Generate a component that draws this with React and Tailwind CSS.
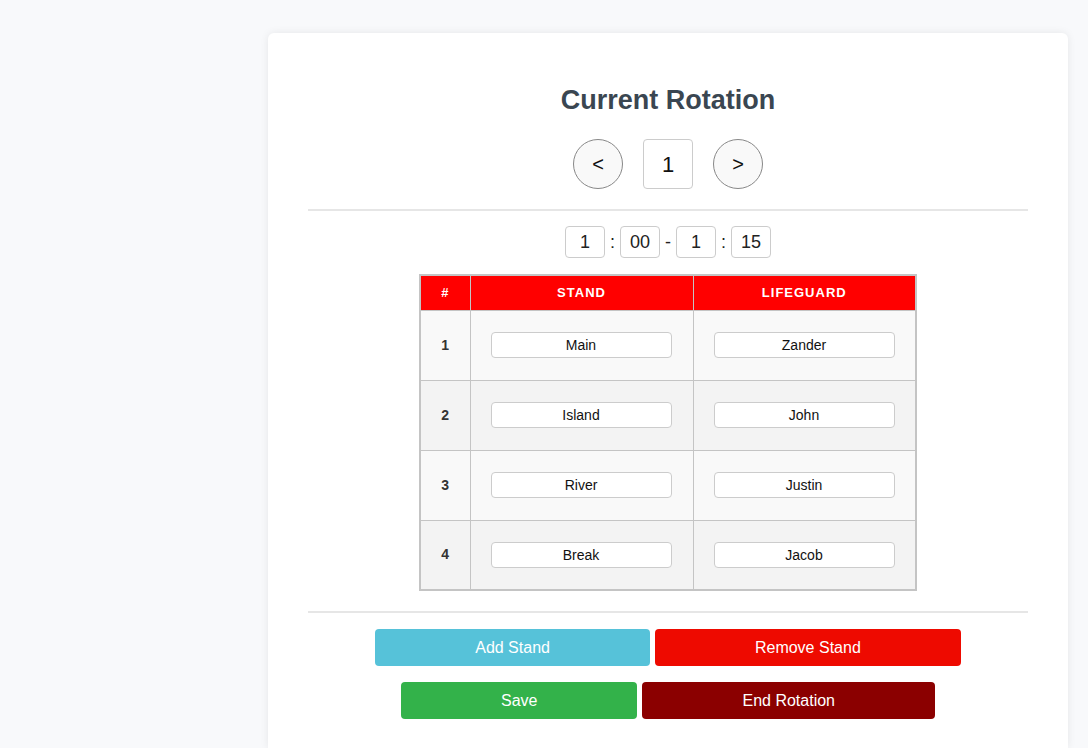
import React, { useState } from 'react';

const rows = [
  { stand: 'Main', guard: 'Zander' },
  { stand: 'Island', guard: 'John' },
  { stand: 'River', guard: 'Justin' },
  { stand: 'Break', guard: 'Jacob' },
];

function TimeBox({ value }) {
  return (
    <input
      defaultValue={value}
      className="w-[40px] h-[32px] rounded-[4px] border border-[#cccccc] bg-white text-center text-[18px] text-[#222] outline-none"
    />
  );
}

export default function App() {
  const [rotation, setRotation] = useState(1);

  return (
    <div
      className="h-[748px] overflow-hidden bg-[#f8f9fb] pl-[268px] pr-[20px] pt-[33px]"
      style={{ fontFamily: '"Liberation Sans", Arial, sans-serif' }}
    >
      <div className="w-[800px] h-[715px] rounded-t-[6px] bg-white px-[40px] pt-[52px] shadow-[0_0_8px_rgba(0,0,0,0.08)]">
        <h2 className="text-center text-[27px] leading-[30px] font-bold text-[#3a4651]">
          Current Rotation
        </h2>

        <div className="mt-[24px] flex items-center justify-center gap-[20px]">
          <button
            onClick={() => setRotation((r) => Math.max(1, r - 1))}
            className="flex h-[50px] w-[50px] items-center justify-center rounded-full border border-[#888] bg-[#f9f9f9] text-[20px] text-[#111]"
          >
            &lt;
          </button>
          <div className="flex h-[50px] w-[50px] items-center justify-center rounded-[4px] border border-[#cccccc] bg-white text-[22px] text-[#111]">
            {rotation}
          </div>
          <button
            onClick={() => setRotation((r) => r + 1)}
            className="flex h-[50px] w-[50px] items-center justify-center rounded-full border border-[#888] bg-[#f9f9f9] text-[20px] text-[#111]"
          >
            &gt;
          </button>
        </div>

        <div className="mt-[20px] h-[2px] bg-[#e6e6e6]" />

        <div className="mt-[15px] flex items-center justify-center text-[18px] text-[#222]">
          <TimeBox value="1" />
          <span className="mx-[5px]">:</span>
          <TimeBox value="00" />
          <span className="mx-[5px]">-</span>
          <TimeBox value="1" />
          <span className="mx-[5px]">:</span>
          <TimeBox value="15" />
        </div>

        <div className="mt-[16px] flex justify-center">
          <table className="w-[496px] table-fixed border-collapse border-2 border-[#c4c4c4]">
            <colgroup>
              <col className="w-[50px]" />
              <col className="w-[223px]" />
              <col className="w-[223px]" />
            </colgroup>
            <thead>
              <tr className="h-[35px] bg-[#ff0000] text-[13px] font-bold uppercase tracking-[1px] text-white">
                <th className="border border-[#c4c4c4]">#</th>
                <th className="border border-[#c4c4c4]">Stand</th>
                <th className="border border-[#c4c4c4]">Lifeguard</th>
              </tr>
            </thead>
            <tbody>
              {rows.map((row, i) => (
                <tr
                  key={i}
                  className={`h-[70px] ${i % 2 === 0 ? 'bg-[#f9f9f9]' : 'bg-[#f3f3f3]'}`}
                >
                  <td className="border border-[#c4c4c4] text-center text-[14px] font-bold text-[#333]">
                    {i + 1}
                  </td>
                  <td className="border border-[#c4c4c4] px-[20px]">
                    <input
                      defaultValue={row.stand}
                      className="h-[26px] w-[181px] rounded-[4px] border border-[#cccccc] bg-white text-center text-[14px] text-[#111] outline-none"
                    />
                  </td>
                  <td className="border border-[#c4c4c4] px-[20px]">
                    <input
                      defaultValue={row.guard}
                      className="h-[26px] w-[181px] rounded-[4px] border border-[#cccccc] bg-white text-center text-[14px] text-[#111] outline-none"
                    />
                  </td>
                </tr>
              ))}
            </tbody>
          </table>
        </div>

        <div className="mt-[20px] h-[2px] bg-[#e6e6e6]" />

        <div className="mt-[16px] flex justify-center gap-[5px]">
          <button className="h-[37px] rounded-[4px] bg-[#56c2d9] px-[100px] text-[16px] text-white">
            Add Stand
          </button>
          <button className="h-[37px] rounded-[4px] bg-[#ee0a00] px-[100px] text-[16px] text-white">
            Remove Stand
          </button>
        </div>
        <div className="mt-[16px] flex justify-center gap-[5px]">
          <button className="h-[37px] rounded-[4px] bg-[#33b24a] px-[100px] text-[16px] text-white">
            Save
          </button>
          <button className="h-[37px] rounded-[4px] bg-[#8b0000] px-[100px] text-[16px] text-white">
            End Rotation
          </button>
        </div>
      </div>
    </div>
  );
}
